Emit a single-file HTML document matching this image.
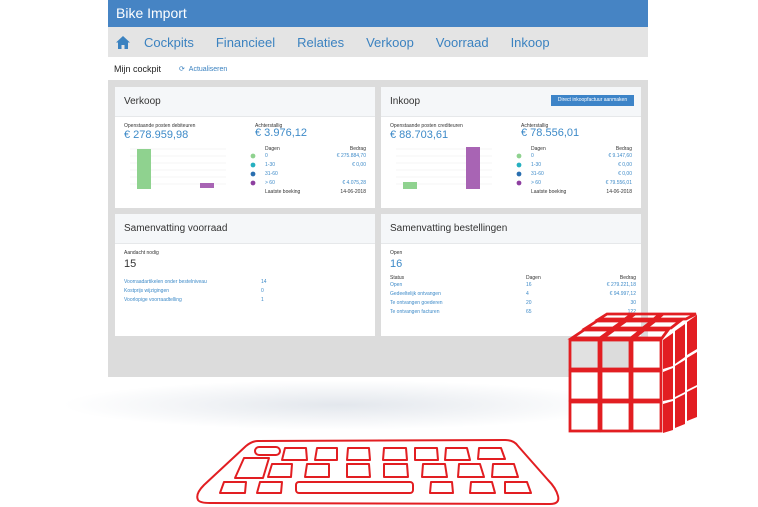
<!DOCTYPE html>
<html><head><meta charset="utf-8"><style>
*{margin:0;padding:0;box-sizing:border-box}
body{width:758px;height:507px;background:#fff;position:relative;overflow:hidden;font-family:"Liberation Sans",Arial,sans-serif}
.scr{position:absolute;left:108px;top:0;width:540px;height:377px;background:#dcdcdc}
.hdr{height:27px;background:#4684c4;color:#fff;font-size:14px;padding:5px 0 0 8px}
.nav{height:30px;background:#e4e4e4;display:flex;align-items:center;font-size:13px;color:#3b82c0}
.nav span{margin-right:22px}
.sub{height:23px;background:#fff;font-size:9px;display:flex;align-items:center;padding-left:6px;color:#222}
.sub b{font-weight:normal;color:#3b82c0;font-size:7px;margin-left:18px}
.card{position:absolute;background:#fff;width:260px}
.ch{height:30px;background:#f5f7f9;border-bottom:1px solid #e6e8ea;font-size:10px;color:#333;padding:9px 0 0 9px;position:relative}
.t{position:absolute;font-size:5px;color:#333;white-space:nowrap}
.b{color:#3d8ac8}
.big{font-size:11px}
</style></head><body>
<div class="scr">
<div class="hdr">Bike Import</div>
<div class="nav"><svg width="14" height="13" viewBox="0 0 14 13" style="margin:0 14px 0 8px"><path d="M7 0L0 6.5h2V13h3.5V9h3v4H12V6.5h2z" fill="#3b82c0"/></svg><span>Cockpits</span><span>Financieel</span><span>Relaties</span><span>Verkoop</span><span>Voorraad</span><span>Inkoop</span></div>
<div class="sub">Mijn cockpit <b>⟳ &nbsp;Actualiseren</b></div>

<div class="card" style="left:7px;top:87px;height:121px"><div class="ch">Verkoop</div>
<div class="t" style="left:9px;top:36px">Openstaande posten debiteuren</div>
<div class="t b big" style="left:9px;top:42px">€ 278.959,98</div>
<div class="t" style="left:140px;top:36px">Achterstallig</div>
<div class="t b big" style="left:140px;top:40px">€ 3.976,12</div>
<svg style="position:absolute;left:15px;top:60px" width="96" height="42"><g stroke="#eee" stroke-width=".6"><line x1="0" y1="2" x2="96" y2="2"/><line x1="0" y1="9" x2="96" y2="9"/><line x1="0" y1="16" x2="96" y2="16"/><line x1="0" y1="23" x2="96" y2="23"/><line x1="0" y1="30" x2="96" y2="30"/><line x1="0" y1="37" x2="96" y2="37"/></g><rect x="7" y="2" width="14" height="40" fill="#8fd28f"/><rect x="70" y="36" width="14" height="5" fill="#a864b4"/></svg>
<div class="t" style="left:150px;top:59px">Dagen</div><div class="t" style="right:9px;top:59px">Bedrag</div>
<svg style="position:absolute;left:135px;top:66px" width="6" height="40"><circle cx="3" cy="3" r="2.4" fill="#8fd28f"/><circle cx="3" cy="12" r="2.4" fill="#26b0c0"/><circle cx="3" cy="21" r="2.4" fill="#2a6fb0"/><circle cx="3" cy="30" r="2.4" fill="#8e3fa0"/></svg>
<div class="t b" style="left:150px;top:66px">0</div><div class="t b" style="right:9px;top:66px">€ 275.884,70</div>
<div class="t b" style="left:150px;top:75px">1-30</div><div class="t b" style="right:9px;top:75px">€ 0,00</div>
<div class="t b" style="left:150px;top:84px">31-60</div>
<div class="t b" style="left:150px;top:93px">&gt; 60</div><div class="t b" style="right:9px;top:93px">€ 4.075,28</div>
<div class="t" style="left:150px;top:102px">Laatste boeking</div><div class="t" style="right:9px;top:102px">14-06-2018</div>
</div>

<div class="card" style="left:273px;top:87px;height:121px"><div class="ch">Inkoop<div style="position:absolute;right:7px;top:8px;width:83px;height:11px;background:#3d84c8;color:#fff;font-size:5px;text-align:center;line-height:11px">Direct inkoopfactuur aanmaken</div></div>
<div class="t" style="left:9px;top:36px">Openstaande posten crediteuren</div>
<div class="t b big" style="left:9px;top:42px">€ 88.703,61</div>
<div class="t" style="left:140px;top:36px">Achterstallig</div>
<div class="t b big" style="left:140px;top:40px">€ 78.556,01</div>
<svg style="position:absolute;left:15px;top:60px" width="96" height="42"><g stroke="#eee" stroke-width=".6"><line x1="0" y1="2" x2="96" y2="2"/><line x1="0" y1="9" x2="96" y2="9"/><line x1="0" y1="16" x2="96" y2="16"/><line x1="0" y1="23" x2="96" y2="23"/><line x1="0" y1="30" x2="96" y2="30"/><line x1="0" y1="37" x2="96" y2="37"/></g><rect x="7" y="35" width="14" height="7" fill="#8fd28f"/><rect x="70" y="0" width="14" height="42" fill="#a864b4"/></svg>
<div class="t" style="left:150px;top:59px">Dagen</div><div class="t" style="right:9px;top:59px">Bedrag</div>
<svg style="position:absolute;left:135px;top:66px" width="6" height="40"><circle cx="3" cy="3" r="2.4" fill="#8fd28f"/><circle cx="3" cy="12" r="2.4" fill="#26b0c0"/><circle cx="3" cy="21" r="2.4" fill="#2a6fb0"/><circle cx="3" cy="30" r="2.4" fill="#8e3fa0"/></svg>
<div class="t b" style="left:150px;top:66px">0</div><div class="t b" style="right:9px;top:66px">€ 9.147,60</div>
<div class="t b" style="left:150px;top:75px">1-30</div><div class="t b" style="right:9px;top:75px">€ 0,00</div>
<div class="t b" style="left:150px;top:84px">31-60</div><div class="t b" style="right:9px;top:84px">€ 0,00</div>
<div class="t b" style="left:150px;top:93px">&gt; 60</div><div class="t b" style="right:9px;top:93px">€ 79.556,01</div>
<div class="t" style="left:150px;top:102px">Laatste boeking</div><div class="t" style="right:9px;top:102px">14-06-2018</div>
</div>

<div class="card" style="left:7px;top:214px;height:122px"><div class="ch">Samenvatting voorraad</div>
<div class="t" style="left:9px;top:36px">Aandacht nodig</div>
<div class="t big" style="left:9px;top:44px">15</div>
<div class="t b" style="left:9px;top:65px">Voorraadartikelen onder bestelniveau</div><div class="t b" style="left:146px;top:65px">14</div>
<div class="t b" style="left:9px;top:74px">Kostprijs wijzigingen</div><div class="t b" style="left:146px;top:74px">0</div>
<div class="t b" style="left:9px;top:83px">Voorlopige voorraadtelling</div><div class="t b" style="left:146px;top:83px">1</div>
</div>

<div class="card" style="left:273px;top:214px;height:122px"><div class="ch">Samenvatting bestellingen</div>
<div class="t" style="left:9px;top:36px">Open</div>
<div class="t b big" style="left:9px;top:44px">16</div>
<div class="t" style="left:9px;top:61px">Status</div><div class="t" style="left:145px;top:61px">Dagen</div><div class="t" style="right:5px;top:61px">Bedrag</div>
<div class="t b" style="left:9px;top:68px">Open</div><div class="t b" style="left:145px;top:68px">16</div><div class="t b" style="right:5px;top:68px">€ 279.221,18</div>
<div class="t b" style="left:9px;top:77px">Gedeeltelijk ontvangen</div><div class="t b" style="left:145px;top:77px">4</div><div class="t b" style="right:5px;top:77px">€ 94.997,12</div>
<div class="t b" style="left:9px;top:86px">Te ontvangen goederen</div><div class="t b" style="left:145px;top:86px">20</div><div class="t b" style="right:5px;top:86px">30</div>
<div class="t b" style="left:9px;top:95px">Te ontvangen facturen</div><div class="t b" style="left:145px;top:95px">65</div><div class="t b" style="right:5px;top:95px">122</div>
</div>
</div>
<div style="position:absolute;left:60px;top:380px;width:560px;height:50px;background:radial-gradient(ellipse at center,rgba(220,225,232,.8),rgba(255,255,255,0) 70%)"></div>

<svg style="position:absolute;left:0;top:0" width="758" height="507" viewBox="0 0 758 507">
<g fill="none" stroke="#e21e22" stroke-width="2.8">
<rect x="570" y="340" width="29" height="29" fill="rgba(255,255,255,.15)"/><rect x="601" y="340" width="29" height="29"/><rect x="632" y="340" width="29" height="29" fill="#fff"/>
<rect x="570" y="371" width="29" height="29" fill="#fff"/><rect x="601" y="371" width="29" height="29" fill="#fff"/><rect x="632" y="371" width="29" height="29" fill="#fff"/>
<rect x="570" y="402" width="29" height="29" fill="#fff"/><rect x="601" y="402" width="29" height="29" fill="#fff"/><rect x="632" y="402" width="29" height="29" fill="#fff"/>
<path d="M572 338L584 330H611L600 338Z M603 338L614 330H641L631 338Z M634 338L644 330H668L662 338Z"/>
<path d="M586 328L597 321H623L613 328Z M616 328L626 321H652L643 328Z M646 328L655 321H680L671 328Z"/>
<path d="M599 319L607 314H632L625 319Z M628 319L635 314H660L654 319Z M657 319L663 314H696L686 319Z"/>
</g>
<g fill="#e21e22">
<path d="M663 340L673 333V366L663 369Z M675 331L685 324V357L675 364Z M687 322L697 315V349L687 355Z"/>
<path d="M663 372L673 368V399L663 401Z M675 366L685 360V392L675 397Z M687 358L697 352V385L687 390Z"/>
<path d="M663 404L673 401V430L663 433Z M675 399L685 394V424L675 428Z M687 392L697 387V417L687 421Z"/>
</g>
<g fill="none" stroke="#e21e22" stroke-width="2" stroke-linejoin="round">
<path d="M258 441Q252 441 246 446L204 485Q195 494 198 500Q200 503 210 503L550 504Q560 504 558 496Q556 488 548 480L518 446Q514 440 505 440Z"/>
<rect x="255" y="447" width="25" height="8" rx="4"/>
<path d="M285 448h21l1 12h-25z M317 448h20l0 12h-22z M348 448h21l1 12h-23z M384 448h22l1 12h-24z M415 448h22l1 12h-23z M446 448h21l3 12h-25z M479 448h22l4 11h-27z"/>
<path d="M244 458h25l-6 20h-28z"/>
<path d="M272 464h20l-1 13h-23z M307 464h22l0 13h-24z M347 464h22l1 13h-23z M384 464h23l1 13h-24z M423 464h22l2 13h-25z M459 464h21l4 13h-26z M493 464h21l4 13h-26z"/>
<path d="M224 482h22l-1 11h-25z M260 482h22l-1 11h-24z"/>
<rect x="296" y="482" width="117" height="11" rx="3"/>
<path d="M431 482h21l1 11h-23z M471 482h21l3 11h-25z M505 482h22l4 11h-26z"/>
</g>
</svg>
</body></html>
